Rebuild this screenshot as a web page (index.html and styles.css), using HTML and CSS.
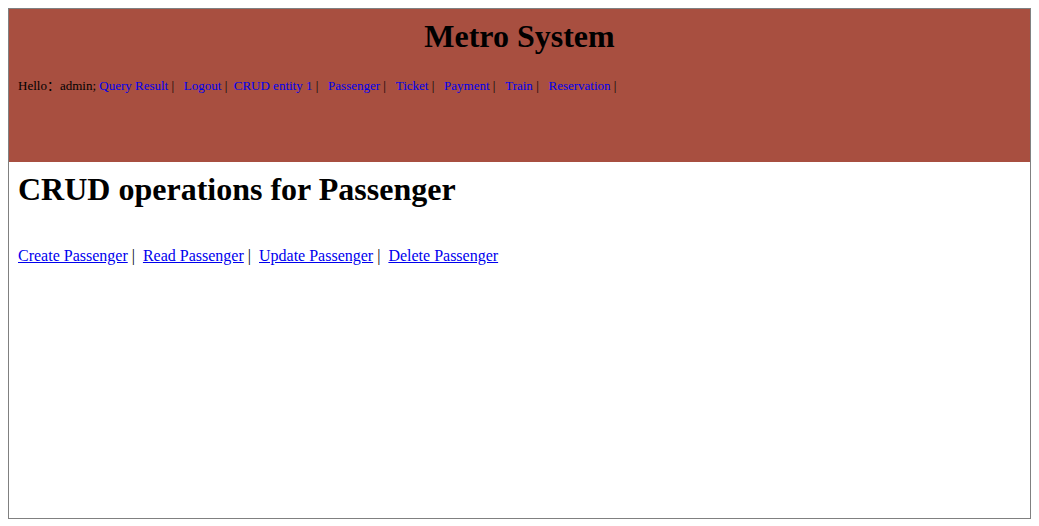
FILE: index.html
```html
<!DOCTYPE html>
<html>
<head>
<meta charset="utf-8">
<link rel="stylesheet" href="styles.css">
</head>
<body>
<div class="frame">
  <div class="header">
    <h1 class="title">Metro System</h1>
    <div class="nav">Hello：admin; <a href="#">Query Result</a> | &nbsp;&nbsp;<a href="#">Logout</a> | &nbsp;<a href="#">CRUD entity 1</a> | &nbsp;&nbsp;<a href="#">Passenger</a> | &nbsp;&nbsp;<a href="#">Ticket</a> | &nbsp;&nbsp;<a href="#">Payment</a> | &nbsp;&nbsp;<a href="#">Train</a> | &nbsp;&nbsp;<a href="#">Reservation</a> |</div>
  </div>
  <div class="content">
    <h1 class="page-title">CRUD operations for Passenger</h1>
    <div class="ops"><a href="#">Create Passenger</a> | &nbsp;<a href="#">Read Passenger</a> | &nbsp;<a href="#">Update Passenger</a> | &nbsp;<a href="#">Delete Passenger</a></div>
  </div>
</div>
</body>
</html>
```

FILE: styles.css
```css
body {
  margin: 8px;
  font-family: "Liberation Serif", "Noto Sans CJK SC", serif;
  color: #000;
}
.frame {
  border: 1px solid #808080;
  box-sizing: border-box;
  height: 511px;
}
.header {
  background: #a84f40;
  height: 153px;
  padding: 9px 9px 0;
  box-sizing: border-box;
}
.title {
  margin: 0;
  text-align: center;
  font-size: 32px;
  font-weight: bold;
  line-height: 37px;
}
.nav {
  margin-top: 23px;
  font-size: 13px;
  line-height: 15px;
}
.nav a {
  color: #0000ee;
  text-decoration: none;
}
.content {
  padding: 9px;
}
.page-title {
  margin: 0;
  font-size: 32px;
  font-weight: bold;
  line-height: 37px;
}
.ops {
  margin-top: 39px;
  font-size: 16px;
  line-height: 18px;
}
.ops a {
  color: #0000ee;
  text-decoration: underline;
}
```
